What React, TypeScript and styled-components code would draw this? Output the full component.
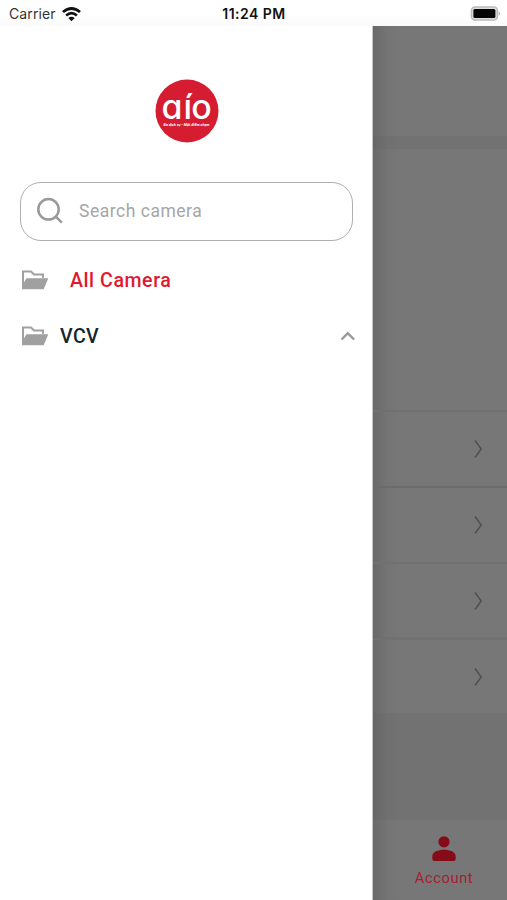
import React from 'react';
import styled, { createGlobalStyle } from 'styled-components';

const GlobalStyle = createGlobalStyle`
  * { box-sizing: border-box; }
  body { margin: 0; background: #fff; font-family: Roboto, sans-serif; }
`;

const Screen = styled.div`
  width: 507px;
  height: 900px;
  overflow: hidden;
  display: flex;
  flex-direction: column;
`;

const StatusBar = styled.header`
  height: 26px;
  flex: none;
  display: grid;
  grid-template-columns: 1fr auto 1fr;
  align-items: center;
  padding: 2px 6px 0 9px;
  background: linear-gradient(#fff 60%, #fafafa);
  font-family: Inter, sans-serif;
  font-size: 14px;
  line-height: 24px;
  color: #111;
`;

const Carrier = styled.div`
  display: flex;
  align-items: center;
  gap: 6px;
  color: #333;
  letter-spacing: 0.12px;
`;

const Clock = styled.div`
  font-weight: 600;
  font-size: 14px;
  letter-spacing: 0.48px;
  margin-left: -2px;
`;

const Battery = styled.svg`
  justify-self: end;
  display: block;
`;

const Body = styled.div`
  flex: 1;
  min-height: 0;
  display: flex;
`;

const Drawer = styled.aside`
  width: 373px;
  flex: none;
  background: #fff;
  border-right: 1px solid #c5c5c5;
  padding: 53px 19px 0 20px;
  display: flex;
  flex-direction: column;
`;

const Logo = styled.svg`
  align-self: center;
  display: block;
  flex: none;
`;

const SearchBox = styled.label`
  height: 59px;
  margin-top: 38.5px;
  border: 1.5px solid #aeaeae;
  border-radius: 21px;
  display: flex;
  align-items: center;
  gap: 15px;
  padding-left: 15px;
  flex: none;
`;

const SearchText = styled.span`
  font-size: 17.5px;
  line-height: 22px;
  letter-spacing: 0.52px;
  color: #a6a6a6;
  padding-bottom: 1px;
`;

const FolderRow = styled.div<{ $active?: boolean }>`
  height: 56px;
  flex: none;
  display: flex;
  align-items: center;
  gap: ${(p) => (p.$active ? 21 : 11)}px;
  padding: 0 0 0 1px;
  color: ${(p) => (p.$active ? '#df1930' : '#14262d')};
  font-size: 19.6px;
  font-weight: 500;
  letter-spacing: ${(p) => (p.$active ? 0.55 : 0.4)}px;
`;

const FolderList = styled.nav`
  margin-top: 11.5px;
  margin-right: -3px;
`;

const RowLabel = styled.span`
  flex: 1;
`;

const Backdrop = styled.main`
  flex: 1;
  display: flex;
  flex-direction: column;
  background: linear-gradient(90deg, rgba(0, 0, 0, 0.1), rgba(0, 0, 0, 0.02) 14px, transparent 28px), #727272;
`;

const Block = styled.section<{ $height: number; $gap?: number }>`
  height: ${(p) => p.$height}px;
  margin-bottom: ${(p) => p.$gap || 0}px;
  flex: none;
  background: linear-gradient(90deg, #696969, #747474 14px, #777 28px);
`;

const MenuRow = styled(Block)<{ $line: string }>`
  border-top: 2px solid ${(p) => p.$line};
  display: flex;
  align-items: center;
  justify-content: flex-end;
  padding-right: 23px;
`;

const AccountTab = styled.footer`
  margin-top: auto;
  height: 80px;
  display: flex;
  flex-direction: column;
  align-items: center;
  padding: 16px 0 0 8px;
  background: linear-gradient(90deg, #696969, #747474 14px, #777 28px);
  color: #a81c35;
  font-size: 14.6px;
  line-height: 18px;
  letter-spacing: 0.65px;
`;

const AccountLabel = styled.span`
  margin-top: 7px;
`;

function WifiIcon() {
  return (
    <svg width="19" height="15" viewBox="0 0 18 14" fill="none" stroke="#111" strokeWidth="2.6">
      <path d="M.9 4.7Q9-2.1 17.1 4.7M3.9 7.9q5.1-4.3 10.2 0" />
      <path d="M6 10.3q3-2.5 6 0l-3 3z" fill="#111" stroke="none" />
    </svg>
  );
}

function FolderIcon() {
  return (
    <svg width="28" height="22" viewBox="0 0 28 22">
      <path d="M2 19V2.5h8l3 3h9V9" fill="none" stroke="#a0a0a0" strokeWidth="2" />
      <path d="M1 20.3V17L5.4 9.2h21.1q.8 0 .5.8l-4.3 10.3z" fill="#a0a0a0" />
    </svg>
  );
}

function Chevron() {
  return (
    <svg width="12" height="20" viewBox="0 0 12 20" fill="none" stroke="#505050" strokeWidth="1.5">
      <path d="M3 1.5 9.2 10 3 18.5" />
    </svg>
  );
}

const rows = [
  { height: 76, gap: 0, line: '#707070' },
  { height: 76, gap: 0, line: '#6b6b6b' },
  { height: 75, gap: 1, line: '#717171' },
  { height: 75, gap: 0, line: '#717171' },
];

export default function App() {
  return (
    <Screen>
      <GlobalStyle />
      <StatusBar>
        <Carrier>
          Carrier
          <WifiIcon />
        </Carrier>
        <Clock>11:24 PM</Clock>
        <Battery width="31" height="16" viewBox="0 0 31 16">
          <rect x="1.4" y="1" width="26" height="13" rx="3.5" fill="#ddd" stroke="#bbb" strokeWidth="1.5" />
          <rect x="3.4" y="3" width="22" height="9" rx="1.5" fill="#050505" />
          <path d="M28.7 5q2.4 2.5 0 5z" fill="#aaa" />
        </Battery>
      </StatusBar>
      <Body>
        <Drawer>
          <Logo width="64" height="64" viewBox="0 0 64 64">
            <circle cx="32" cy="32" r="31.5" fill="#d51c31" />
            <text y="40.2" fill="#fff" fontFamily="Inter, sans-serif" fontSize="34" fontWeight="500">
              <tspan x="6.4">ɑ</tspan>
              <tspan x="28.6">í</tspan>
              <tspan x="36.3">o</tspan>
            </text>
            <text
              x="8.5"
              y="47.4"
              fill="#fff"
              fontFamily="Roboto, sans-serif"
              fontSize="3.75"
              fontWeight="700"
              fontStyle="italic"
            >
              Đa dịch vụ - Một điểm chạm
            </text>
          </Logo>
          <SearchBox>
            <svg width="28" height="28" viewBox="0 0 28 28" fill="none" stroke="#999" strokeWidth="2.5">
              <circle cx="12.5" cy="12.3" r="10.2" />
              <path d="m19.8 19.6 6 6" />
            </svg>
            <SearchText>Search camera</SearchText>
          </SearchBox>
          <FolderList>
            <FolderRow $active>
              <FolderIcon />
              <RowLabel>All Camera</RowLabel>
            </FolderRow>
            <FolderRow>
              <FolderIcon />
              <RowLabel>VCV</RowLabel>
              <svg width="16" height="10" viewBox="0 0 16 10" fill="none" stroke="#999" strokeWidth="2.4">
                <path d="m1.5 8.5 6.3-6.3 6.3 6.3" />
              </svg>
            </FolderRow>
          </FolderList>
        </Drawer>
        <Backdrop>
          <Block $height={110} $gap={13} />
          <Block $height={261} />
          {rows.map((row, i) => (
            <MenuRow key={i} $height={row.height} $gap={row.gap} $line={row.line}>
              <Chevron />
            </MenuRow>
          ))}
          <AccountTab>
            <svg width="24" height="26" viewBox="0 0 24 26" fill="#850b19">
              <circle cx="12" cy="5.8" r="5.6" />
              <path d="M.3 25v-4.6C.3 15.8 6 13.7 12 13.7s11.7 2.1 11.7 6.7V23q0 2-2 2H2.3q-2 0-2-2z" />
            </svg>
            <AccountLabel>Account</AccountLabel>
          </AccountTab>
        </Backdrop>
      </Body>
    </Screen>
  );
}
